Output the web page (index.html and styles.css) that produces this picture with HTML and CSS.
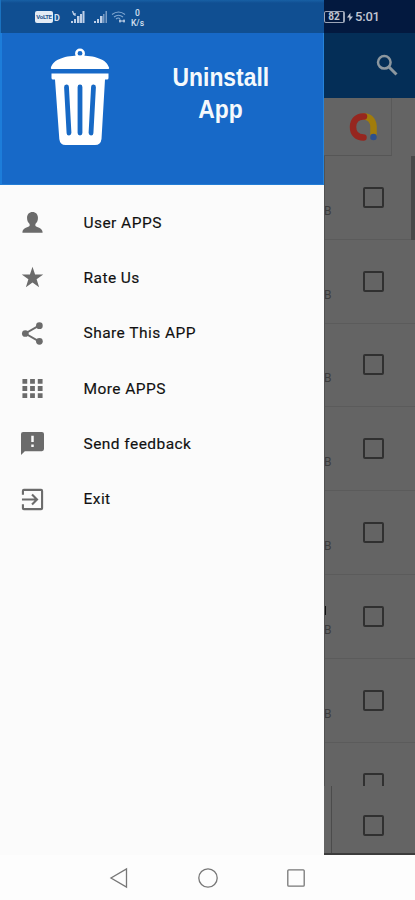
FILE: index.html
```html
<!DOCTYPE html>
<html lang="en">
<head>
<meta charset="utf-8">
<title>Uninstall App</title>
<link rel="stylesheet" href="styles.css">
</head>
<body>
<div class="phone">
  <div class="screen">
    <aside class="drawer">
      <div class="status status-left">
        <span class="volte">VoLTE</span><span class="sim">D</span>
        <svg class="signal" width="15" height="14" viewBox="0 0 15 14"><path d="M1 13v-2h2v2zM4 13V9h2v4zM7 13V6h2.500v7zM10 13V4h2v9zM12.500 13V1h2v12z"/><path d="M2.500 1l1.500 4M5 3v3" stroke="#bfd0e8" stroke-width="1.300"/></svg>
        <svg class="signal second" width="14" height="14" viewBox="0 0 14 14"><path d="M1 13v-2h2v2zM4 13V9h2v4zM7 13V6h2.500v7z"/><path d="M10 13V4h1.500v9zM12.500 13V1H14v12z" opacity=".6"/></svg>
        <svg class="wifi" width="15" height="14" viewBox="0 0 15 14" fill="none" stroke="#82a8d2" stroke-width="1.100"><path d="M1 4.500Q7.500-.5 14 4.500M3 7Q7.500 3.500 12 7M5 9Q7.500 7 9 9"/><path d="M8 11h6M9 9.500v3M13 9.500v3" stroke="#d5e0f0"/></svg>
        <span class="speed">0<br>K/s</span>
      </div>
      <header class="hero">
        <svg class="trash" width="60" height="98" viewBox="0 0 60 98">
          <circle cx="30" cy="5.500" r="3.700" fill="none" stroke="#fff" stroke-width="2.500"/>
          <path fill="#fff" d="M.8 20C3 11 16 7.500 30 7.500S57 11 59.200 20q0 1-1 1H1.800q-1 0-1-1zM1.500 25.500h57v4.500q0 1.500-1.500 1.500h-2L51.500 91q-.7 6-6.500 6H15.500Q10 97 9.300 91L5 31.500H3Q1.500 31.500 1.500 30z"/>
          <g fill="none" stroke="#1769c5" stroke-width="4.800" stroke-linecap="round"><path d="M16.500 39l2.500 46M30 39v46M43.500 39L41 85"/></g>
        </svg>
        <h1>Uninstall<br>App</h1>
      </header>
      <nav class="menu">
        <a class="item"><svg viewBox="0 0 24 24"><path d="M12 1C8.600 1 6.300 3.500 6.300 7c0 3 1 5 2.700 6.600v1.800C8.500 17 1.500 17.500 1.500 22v.8h21V22c0-4.500-7-5-7.500-6.600v-1.800C16.700 12 17.700 10 17.700 7c0-3.500-2.300-6-5.700-6z"/></svg><span>User APPS</span></a>
        <a class="item"><svg viewBox="0 0 24 24"><path d="M12 .8l2.700 8.100h8.500l-6.900 5 2.600 8.300L12 17.100l-6.900 5.100 2.600-8.300-6.900-5h8.500z"/></svg><span>Rate Us</span></a>
        <a class="item"><svg viewBox="0 0 24 24"><path d="M19.200 3.500L4.500 12l14.700 8.500" fill="none" stroke="#6b6b6b" stroke-width="2"/><circle cx="19.200" cy="3.800" r="3.500"/><circle cx="4.500" cy="12" r="3.500"/><circle cx="19.200" cy="20.200" r="3.500"/></svg><span>Share This APP</span></a>
        <a class="item"><svg viewBox="0 0 24 24"><path d="M1.500 2h5v5h-5zM9.500 2h5v5h-5zM17.500 2h5v5h-5zM1.500 9.500h5v5h-5zM9.500 9.500h5v5h-5zM17.500 9.500h5v5h-5zM1.500 17h5v5h-5zM9.500 17h5v5h-5zM17.500 17h5v5h-5z"/></svg><span>More APPS</span></a>
        <a class="item"><svg viewBox="0 0 24 24"><path fill-rule="evenodd" d="M2.200 0h19.600Q24 0 24 2.200v15.600Q24 20 21.800 20H4L0 24V2.200Q0 0 2.200 0zM10.700 4v6.500h2.600V4zM10.700 13v2.700h2.600V13z"/></svg><span>Send feedback</span></a>
        <a class="item"><svg viewBox="0 0 24 24"><path d="M2 7V3q0-1 1-1h18q1 0 1 1v18q0 1-1 1H3q-1 0-1-1v-4M1 12h15M11.500 6.800L16.700 12l-5.200 5.200" fill="none" stroke="#6b6b6b" stroke-width="2.200"/></svg><span>Exit</span></a>
      </nav>
    </aside>
    <main class="behind">
      <div class="status status-right">
        <span class="battery">82</span>
        <svg width="7" height="10" viewBox="0 0 7 10"><path d="M4 0L0 5.500h2.800L2.500 10 7 4.500H4z" fill="#c2c6d2"/></svg>
        <span class="clock">5:01</span>
      </div>
      <div class="toolbar"><svg width="22" height="22" viewBox="0 0 22 22" fill="none" stroke="#8c979f"><circle cx="8.300" cy="8.300" r="6.300" stroke-width="2.500"/><path d="M13 13l7.500 7.500" stroke-width="3"/></svg></div>
      <div class="tabs"><div class="tab">
        <svg width="30" height="30" viewBox="0 0 30 30" fill="none" stroke-width="6.500" stroke-linecap="round"><path d="M15 4.500Q23.500 5 24.500 14v10" stroke="#a17c0b"/><path d="M15 4.500C8 4 4 9 4 15c0 6.500 4 10.500 10.500 10.500" stroke="#96261f"/><circle cx="24.500" cy="25" r="3.300" fill="#2d508c"/></svg>
      </div></div>
      <div class="list">
        <div class="row"><span>B</span><i class="box"></i></div>
        <div class="row"><span>B</span><i class="box"></i></div>
        <div class="row"><span>B</span><i class="box"></i></div>
        <div class="row"><span>B</span><i class="box"></i></div>
        <div class="row"><span>B</span><i class="box"></i></div>
        <div class="row marked"><span>B</span><i class="box"></i></div>
        <div class="row"><span>B</span><i class="box"></i></div>
        <div class="row"><span></span><i class="box"></i></div>
        <div class="scrollbar"></div>
      </div>
      <div class="footer"><i class="box"></i></div>
    </main>
  </div>
  <div class="navbar">
    <svg width="20" height="22" viewBox="0 0 20 22"><path d="M17.500 2v18L2 11z"/></svg>
    <svg width="22" height="22" viewBox="0 0 22 22"><circle cx="11" cy="11" r="9.200"/></svg>
    <svg width="20" height="22" viewBox="0 0 20 22"><rect x="1.800" y="2.800" width="16.400" height="16.400" rx="1"/></svg>
  </div>
</div>
</body>
</html>
```

FILE: styles.css
```css
* { box-sizing: border-box; }
body { margin: 0; font-family: Roboto, "Liberation Sans", sans-serif; }
.phone { width: 415px; height: 900px; display: flex; flex-direction: column; background: #fdfdfd; overflow: hidden; }
.screen { height: 855px; display: grid; grid-template-columns: 324px 91px; }
.drawer { background: #fbfbfb; display: flex; flex-direction: column; }
.status { height: 33px; flex: none; display: flex; align-items: center; }
.status-left { background: linear-gradient(#1860a5 0, #104f92 3px, #104f92 100%); padding-left: 34px; color: #d5e0f0; border-left: 1px solid #1a72c0; }
.volte { width: 18px; height: 12px; background: #e3ebf5; border-radius: 2px; color: #25568f; font-size: 6px; line-height: 12px; font-weight: 700; text-align: center; letter-spacing: -.3px; }
.sim { font-size: 9px; font-weight: 700; margin-left: 1px; width: 6px; padding-top: 2px; }
.signal { fill: #bfd0e8; margin-left: 10px; }
.signal.second { margin-left: 8px; }
.wifi { margin-left: 4px; }
.speed { font-size: 8.5px; line-height: 10px; text-align: center; margin-left: 5px; font-weight: 500; padding-top: 2px; }
.hero { height: 152px; flex: none; background: #1769c8; border-left: 2px solid #1d7dda; border-right: 1px solid #2583da; border-bottom: 1px solid #247dd5; display: flex; padding: 15px 0 0 48px; }
.trash { flex: none; }
h1 { margin: 13px 0 0 56px; width: 109px; font: bold 26px/32px "Liberation Sans", sans-serif; color: #f5f9fc; text-align: center; transform: scaleX(.88); transform-origin: center; }
.menu { padding-top: 10px; display: flex; flex-direction: column; }
.item { height: 55.3px; display: flex; align-items: center; gap: 39.5px; padding-left: 21px; font-size: 15.5px; font-weight: 400; color: #111; letter-spacing: .45px; -webkit-text-stroke: .15px #111; }
.item svg { width: 23px; height: 23px; fill: #6b6b6b; }
.behind { background: #646464; display: flex; flex-direction: column; min-width: 0; overflow: hidden; border-bottom: 2px solid #3c3c3c; }
.status-right { background: #03193f; color: #c2c6d2; }
.battery { width: 21px; height: 12px; border: 1px solid #9ca5b7; border-right-width: 2px; border-radius: 2px; font-size: 10px; line-height: 10px; font-weight: 700; text-align: center; }
.status-right svg { width: 6px; margin: 0 2px; }
.clock { font-size: 13px; font-weight: 500; letter-spacing: -.2px; }
.toolbar { height: 65px; flex: none; background: #042e57; padding: 21px 0 0 52px; }
.tabs { height: 58px; flex: none; }
.tab { width: 68px; height: 58px; border-right: 1px solid #595959; border-bottom: 1px solid #565656; padding: 14px 0 0 25px; }
.list { position: relative; height: 630px; flex: none; overflow: hidden; border-left: 1px solid #525252; }
.row { height: 83.8px; border-bottom: 1px solid #5b5b5b; display: flex; align-items: center; }
.row span { width: 38px; font-size: 12px; color: #3c3c3c; padding-top: 27px; margin-left: -1px; }
.row.marked { background: linear-gradient(#111, #111) 0 31px / 1px 9px no-repeat; }
.box { display: block; width: 21px; height: 21px; border: 2px solid #303030; border-radius: 2px; margin-left: 1px; }
.scrollbar { position: absolute; right: 0; top: 0; width: 4px; height: 84px; background: #494949; }
.footer { flex: 1; margin-left: 7px; border-left: 1px solid #4b4b4b; padding: 29px 0 0 30px; }
.navbar { flex: 1; display: flex; align-items: center; gap: 67.5px; padding-left: 109px; }
.navbar svg { fill: none; stroke: #777; stroke-width: 1.3; }
```
